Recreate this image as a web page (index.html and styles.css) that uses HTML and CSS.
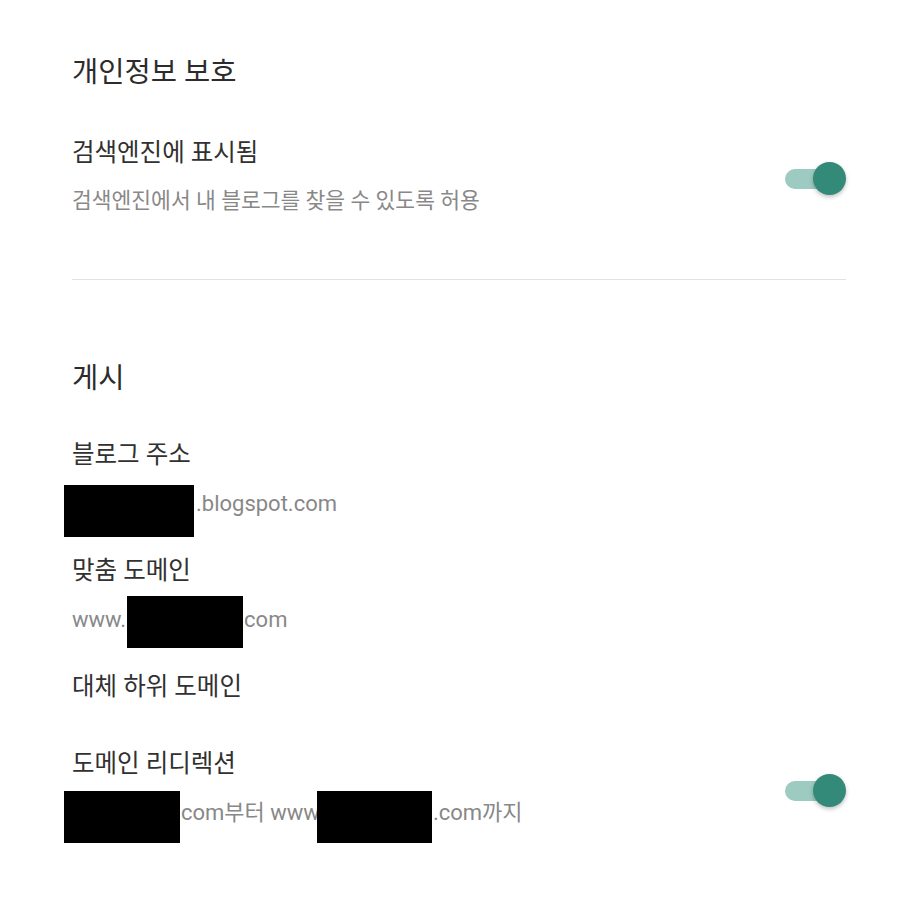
FILE: index.html
```html
<!DOCTYPE html>
<html>
<head>
  <title>설정 - 개인정보 보호</title>
  <link rel="stylesheet" href="styles.css">
</head>
<body>
  <div class="page">
    <h2 class="section-title">개인정보 보호</h2>
    <div class="setting-row">
      <div class="setting-text">
        <div class="setting-label">검색엔진에 표시됨</div>
        <div class="setting-value sub">검색엔진에서 내 블로그를 찾을 수 있도록 허용</div>
      </div>
      <div class="switch on"><span class="knob"></span></div>
    </div>

    <hr class="divider">

    <h2 class="section-title second">게시</h2>
    <div class="setting-list">
      <div class="setting-row">
        <div class="setting-text">
          <div class="setting-label">블로그 주소</div>
          <div class="setting-value"><span class="mask mask-blog"></span>.blogspot.com</div>
        </div>
      </div>
      <div class="setting-row">
        <div class="setting-text">
          <div class="setting-label">맞춤 도메인</div>
          <div class="setting-value">www.<span class="mask mask-domain"></span>com</div>
        </div>
      </div>
      <div class="setting-row empty">
        <div class="setting-text">
          <div class="setting-label">대체 하위 도메인</div>
        </div>
      </div>
      <div class="setting-row">
        <div class="setting-text">
          <div class="setting-label">도메인 리디렉션</div>
          <div class="setting-value"><span class="mask mask-from"></span>com부터 www<span class="mask mask-to"></span>.com까지</div>
        </div>
        <div class="switch on"><span class="knob"></span></div>
      </div>
    </div>
  </div>
</body>
</html>
```

FILE: styles.css
```css
body {
  margin: 0;
  background: #fff;
  font-family: Roboto, "Noto Sans CJK KR", sans-serif;
  color: #333;
}
.page {
  padding: 55px 74px 40px 72px;
}
.section-title {
  margin: 0 0 46px;
  font-size: 28.5px;
  line-height: 36px;
  font-weight: 400;
  color: #2c2c2c;
}
.section-title.second {
  margin-bottom: 42px;
}
.setting-row {
  display: flex;
  align-items: center;
}
.setting-text {
  flex: 1;
}
.setting-label {
  font-size: 24.5px;
  line-height: 32px;
  color: #313131;
}
.setting-value {
  margin-top: 19px;
  font-size: 22px;
  line-height: 28px;
  color: #888;
  white-space: nowrap;
}
.setting-value.sub {
  margin-top: 18px;
  font-size: 21.5px;
}
.divider {
  margin: 64px 0 81px;
  border: none;
  border-top: 1px solid #e2e2e2;
}
.setting-list {
  display: flex;
  flex-direction: column;
  gap: 37px;
}
.setting-row.empty {
  padding-bottom: 8px;
}

/* redaction boxes */
.mask {
  display: inline-block;
  position: relative;
  height: 28px;
  vertical-align: top;
}
.mask::before {
  content: "";
  position: absolute;
  background: #000;
  height: 52px;
}
.mask-blog { width: 124px; }
.mask-blog::before { left: -8px; right: 2px; top: -5px; }
.mask-domain { width: 118px; }
.mask-domain::before { left: 1px; right: 1px; top: -10px; }
.mask-from { width: 109px; }
.mask-from::before { left: -8px; right: 1px; top: -8px; }
.mask-to { width: 113px; }
.mask-to::before { left: -3px; right: 1px; top: -8px; }

/* toggle switch */
.switch {
  position: relative;
  width: 61px;
  height: 34px;
  margin-top: 6px;
}
.switch::before {
  content: "";
  position: absolute;
  left: 0;
  top: 7px;
  width: 55px;
  height: 20px;
  border-radius: 10px;
  background: #9dcbc1;
}
.switch .knob {
  position: absolute;
  right: 0;
  top: 0;
  width: 33px;
  height: 33px;
  border-radius: 50%;
  background: #338a78;
  box-shadow: 0 2px 4px rgba(0,0,0,0.25);
}
```
